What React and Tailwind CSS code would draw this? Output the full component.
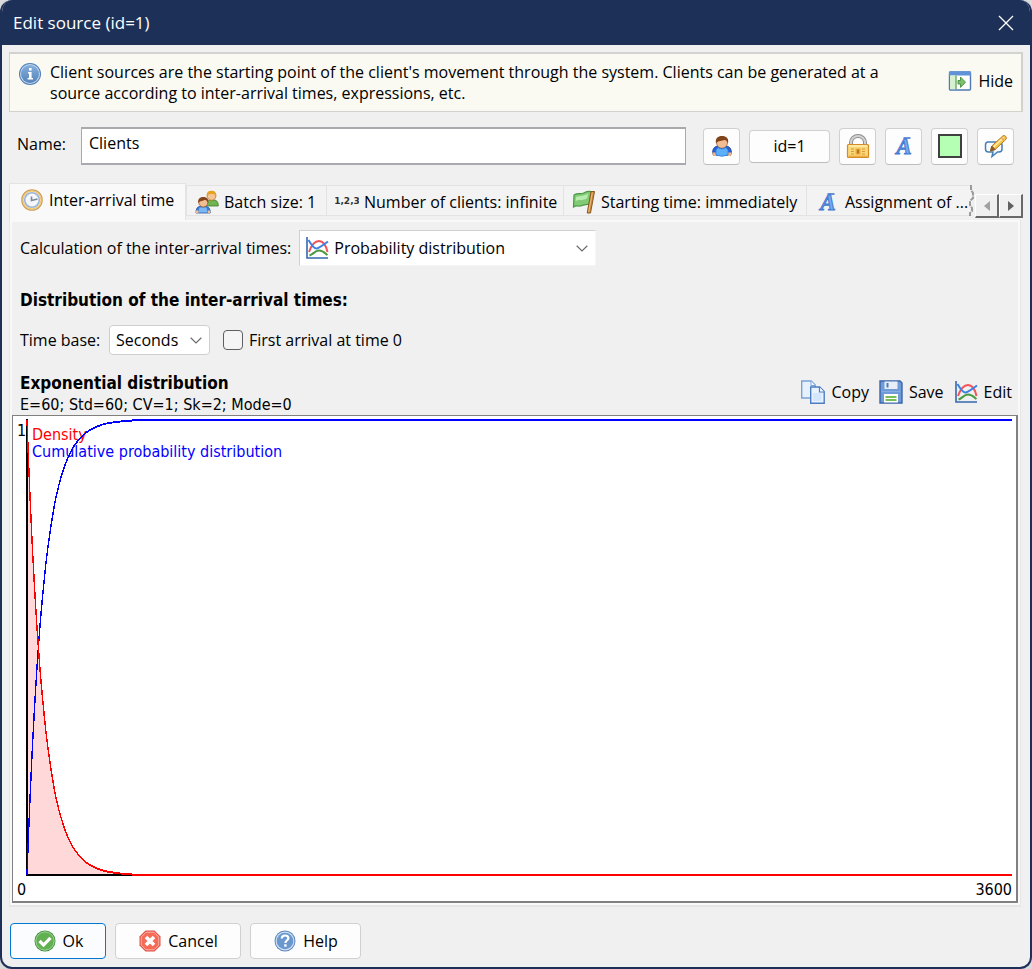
import React from 'react';

/* ---------- icons ---------- */

function InfoIcon() {
  return (
    <svg className="size-6 shrink-0" viewBox="0 0 24 24" aria-hidden="true">
      <defs>
        <linearGradient id="infoFill" x1="0" y1="0" x2="0" y2="1">
          <stop offset="0" stopColor="#86b0dc" />
          <stop offset="1" stopColor="#5583b8" />
        </linearGradient>
      </defs>
      <circle cx="12" cy="12" r="11" fill="#4f7fba" />
      <circle cx="12" cy="12" r="10" fill="#c3d8ef" />
      <circle cx="12" cy="12" r="9" fill="url(#infoFill)" />
      <rect x="11" y="6" width="2.6" height="2.6" fill="#fff" />
      <path d="M10 10h3.6v6H15v1.6H9.6V16H11v-4.400h-1z" fill="#fff" />
    </svg>
  );
}

function HideIcon() {
  return (
    <svg className="size-6" viewBox="0 0 24 24" aria-hidden="true">
      <rect x="1.5" y="3" width="21" height="18" rx="1" fill="#fff" stroke="#4f78b5" strokeWidth="1.4" />
      <rect x="1" y="2.5" width="22" height="4" fill="#5f92d6" />
      <rect x="2.2" y="6.5" width="5.3" height="13.7" fill="#d5f2cf" />
      <path d="M8 6.5v13.7" stroke="#6aa561" strokeWidth="1.4" />
      <path d="M10 11.5h2.500V8l5 5.200-5 5.200V15H10z" fill="#7fbf6e" stroke="#4b964b" strokeWidth="1" />
    </svg>
  );
}

function UserIcon() {
  return (
    <svg className="size-6" viewBox="0 0 24 24" aria-hidden="true">
      <path d="M2.500 19c0-4 1.500-6.500 5-7h9c3.500.5 5 3 5 7l-1 2.500h-17z" fill="#2a5fd0" stroke="#234c9c" strokeWidth=".8" />
      <path d="M2 18.500h4.500V22H3.500zM17.500 18.500H22L20.500 22h-3z" fill="#f3b583" />
      <ellipse cx="12" cy="8.500" rx="5.500" ry="5.800" fill="#f3bd93" stroke="#a7683d" strokeWidth=".8" />
      <path d="M6 9.500C5 4 8 2 12 2s7.200 2 6 7.500c-1-2.500-2-3.500-3.500-3.500-2 1.200-6.500.3-8.500 3.500z" fill="#81431a" />
      <path d="M6 16l2-2.500q4 3 8 0l2 2.500v5q-6 2.500-12 0z" fill="#5cb0fa" stroke="#2f7ede" strokeWidth=".8" />
    </svg>
  );
}

function LockIcon() {
  return (
    <svg className="size-6" viewBox="0 0 24 24" aria-hidden="true">
      <path d="M5 12V8.500a7 6.500 0 0 1 14 0V12" fill="none" stroke="#8d8d8d" strokeWidth="4" />
      <path d="M5 12V8.500a7 6.500 0 0 1 14 0V12" fill="none" stroke="#d2d2d2" strokeWidth="2" />
      <rect x="1.500" y="10.500" width="21" height="13" rx="1" fill="#fbd877" stroke="#d58c28" strokeWidth="1.200" />
      <path d="M3 12h18" stroke="#fff0b7" strokeWidth="1.400" />
      <path d="M5 15h3m-3 2.500h3M5 20h3m8-5h3m-3 2.500h3M16 20h3" stroke="#d79837" strokeWidth="1.200" />
      <path d="M9.500 14.500h5v6h-5z" fill="#eaa93c" />
      <path d="M12 15.500v4" stroke="#a86a1c" strokeWidth="1.600" />
      <path d="M2.500 22.300h19" stroke="#eba63d" strokeWidth="1.200" />
    </svg>
  );
}

function LetterIcon() {
  return (
    <svg className="size-6 shrink-0" viewBox="0 0 24 24" aria-hidden="true">
      <text x="12" y="20" textAnchor="middle" fontFamily="Liberation Serif, serif" fontSize="23" fontWeight="700" fontStyle="italic" fill="#76aaf0" stroke="#4377cf" strokeWidth="1">A</text>
      <path d="M11.500 4h7" stroke="#4377cf" strokeWidth="1.600" />
    </svg>
  );
}

function PencilIcon() {
  return (
    <svg className="size-6" viewBox="0 0 24 24" aria-hidden="true">
      <path d="M3 8h12q3 0 3 3v4q0 3-3 3h-1.500L8 22.500l1-4.500H4.500q-3 0-3-3v-4Q1.500 8 4 8z" fill="#f8fbff" stroke="#477fb8" strokeWidth="1.500" />
      <path d="M6.500 17l1.300-5L19 1.800q1.500-.8 2.700.6t.4 2.700L11.200 15.500z" fill="#f7c64c" stroke="#b87a1f" strokeWidth="1" />
      <path d="M9.500 13L19.500 3.500" stroke="#fff0a8" strokeWidth="1.400" />
      <path d="M6.500 17l1.300-5 3.400 3.500z" fill="#8d5a30" stroke="#83572e" strokeWidth=".8" />
      <path d="M17.300 3.500l3.400 3.400" stroke="#d9a870" strokeWidth="1.400" />
    </svg>
  );
}

function ClockIcon() {
  return (
    <svg className="size-6 shrink-0" viewBox="0 0 24 24" aria-hidden="true">
      <circle cx="12" cy="12" r="10" fill="#fff" stroke="#c9a05a" strokeWidth="1.600" />
      <circle cx="12" cy="12" r="9" fill="none" stroke="#f0cb7d" strokeWidth="1.500" />
      <circle cx="12" cy="12" r="7.300" fill="#f4f7fb" stroke="#9db3d8" strokeWidth="1.600" />
      <path d="M11.500 8.500v4l6-1.500" fill="none" stroke="#7d8895" strokeWidth="1.600" />
    </svg>
  );
}

function UsersIcon() {
  return (
    <svg className="size-6 shrink-0" viewBox="0 0 24 24" aria-hidden="true">
      <path d="M11 16c0-4 1.500-6 4-6h4c3 0 4.300 2.500 4.300 6z" fill="#6fb450" stroke="#3c7c2a" strokeWidth=".8" />
      <circle cx="16.500" cy="6" r="4.300" fill="#f5c495" stroke="#c0772c" strokeWidth=".8" />
      <path d="M11.800 6.500C11 2 14 .8 16.500.8S22 2 21.300 6.500C20 4 18 4 16.500 4s-3.200 0-4.700 2.500z" fill="#e5a124" />
      <path d="M1 23c0-4.500 1.500-6.500 4-6.500h6c2.500 0 4.300 2 4.300 6.500z" fill="#3d7ed5" stroke="#2450a0" strokeWidth=".8" />
      <path d="M4.500 17.500h7l1 5h-9z" fill="#79b8f5" />
      <path d="M1 20.500h2.500V23H1zM12.800 20.500h2.500V23h-2.500z" fill="#f3bd93" />
      <circle cx="8.300" cy="12.500" r="4.500" fill="#f3bd93" stroke="#9a5b31" strokeWidth=".8" />
      <path d="M3.300 13C2.500 8.500 5.500 7 8.300 7s5.700 1.500 5 6c-1.300-2.500-2.500-3-4-3-1.500 1.200-4.500.8-6 3z" fill="#87461b" />
    </svg>
  );
}

function NumbersIcon() {
  return (
    <svg className="size-6 shrink-0" viewBox="0 0 24 24" aria-hidden="true">
      <text x="12" y="14" textAnchor="middle" fontFamily="DejaVu Sans" fontSize="9" fontWeight="700" fill="#333">1,2,3</text>
    </svg>
  );
}

function FlagIcon() {
  return (
    <svg className="size-6 shrink-0" viewBox="0 0 24 24" aria-hidden="true">
      <path d="M2 5c3-2 5-1 8-1.500s4-3 9-2l-1.500 13c-4-1-6 1-9 1.500s-4.500-1-7 1z" fill="#82cb76" stroke="#4a9a45" strokeWidth="1.200" />
      <path d="M4 7c4-1.500 8-.5 12-3.500l-.7 4.500C11 11 8 9 3.500 11z" fill="#b8ecaf" />
      <path d="M19 1.500h3.500L18.500 23h-3.300z" fill="#c98a3b" stroke="#8a5a24" strokeWidth="1" />
      <path d="M20.300 2.500L16.700 22" stroke="#edc080" strokeWidth="1" />
    </svg>
  );
}

function CurvesIcon() {
  return (
    <svg className="size-6 shrink-0" viewBox="0 0 24 24" aria-hidden="true">
      <path d="M4.500 19.500C8 18.500 10 14.500 14 14.500s6 2.500 8.500 4.500" fill="none" stroke="#4a9a3f" strokeWidth="2" />
      <path d="M4 16Q8 5 14 5t8.500 11" fill="none" stroke="#f5525a" strokeWidth="2" />
      <path d="M3.500 4Q9 13.500 12 12.500T23 5.500" fill="none" stroke="#3c82e2" strokeWidth="2" />
      <path d="M2 1v21h21" fill="none" stroke="#3468ad" strokeWidth="1.600" />
    </svg>
  );
}

function CopyIcon() {
  return (
    <svg className="size-6" viewBox="0 0 24 24" aria-hidden="true">
      <path d="M.7 1h9.500l4 4v13H.7z" fill="#e7f1fd" stroke="#79a2d8" strokeWidth="1.400" />
      <path d="M10 1v4.500h4" fill="#fff" stroke="#79a2d8" />
      <path d="M9.700 7h9l4.500 4.500v11.700H9.700z" fill="#e9f3ff" stroke="#4c7dc1" strokeWidth="1.400" />
      <path d="M18.500 7v5h4.500" fill="#fff" stroke="#4c7dc1" strokeWidth="1.200" />
      <path d="M12 13h8.500v8H12z" fill="#d3e6fc" />
    </svg>
  );
}

function SaveIcon() {
  return (
    <svg className="size-6" viewBox="0 0 24 24" aria-hidden="true">
      <path d="M1 1h20L23 3v20H1z" fill="#6f9bd8" stroke="#3a64a8" strokeWidth="1.400" />
      <path d="M5.500 1.500h13V9h-13z" fill="#e9eff8" />
      <path d="M8.500 3v4.500" stroke="#4d78b9" strokeWidth="2" />
      <path d="M2.500 11.500h19" stroke="#86aee3" />
      <path d="M5 14h14v8.500H5z" fill="#fff" />
      <path d="M6.500 17h11M6.500 20h11" stroke="#79bd55" strokeWidth="1.800" />
    </svg>
  );
}

function OkIcon() {
  return (
    <svg className="size-6" viewBox="0 0 24 24" aria-hidden="true">
      <circle cx="12" cy="12" r="10.500" fill="#3f8a3a" />
      <circle cx="12" cy="12" r="9.200" fill="#62b052" stroke="#a6dc99" strokeWidth="1" />
      <path d="M6.500 12l4 4 7-7.200" fill="none" stroke="#fff" strokeWidth="3.200" />
    </svg>
  );
}

function CancelIcon() {
  return (
    <svg className="size-6" viewBox="0 0 24 24" aria-hidden="true">
      <path d="M7.500 1.500h9l6 6v9l-6 6h-9l-6-6v-9z" fill="#e15146" />
      <path d="M8 3.200h8L20.800 8v8L16 20.800H8L3.200 16V8z" fill="#f76a55" stroke="#fbb9af" strokeWidth="1" />
      <path d="M8 8l8 8m0-8l-8 8" stroke="#fff" strokeWidth="3.600" />
    </svg>
  );
}

function HelpIcon() {
  return (
    <svg className="size-6" viewBox="0 0 24 24" aria-hidden="true">
      <circle cx="12" cy="12" r="10.500" fill="#5c86bd" />
      <circle cx="12" cy="12" r="9.500" fill="#cfe0f3" />
      <circle cx="12" cy="12" r="8.300" fill="#6a97cd" />
      <path d="M8.800 9.500q0-3 3.300-3t3.300 2.700c0 2-3 2.200-3 4.800" fill="none" stroke="#fff" strokeWidth="2.200" />
      <rect x="11.200" y="15.300" width="2.400" height="2.400" fill="#fff" />
    </svg>
  );
}

function ChevronDown({ className }) {
  return (
    <svg className={className} viewBox="0 0 12 7" aria-hidden="true">
      <path d="M.7.8L6 6 11.300.8" fill="none" stroke="#6b6b6b" strokeWidth="1.200" />
    </svg>
  );
}

/* ---------- parts ---------- */

function ToolButton({ label, children }) {
  return (
    <button type="button" aria-label={label} className="flex size-[37px] shrink-0 items-center justify-center rounded border border-[#d0d0d0] border-b-[#bdbdbd] bg-[#fdfdfd]">
      {children}
    </button>
  );
}

function LinkButton({ icon, children }) {
  return (
    <button type="button" className="flex items-center gap-1.5">
      {icon}
      {children}
    </button>
  );
}

function Tab({ icon, children, className = '' }) {
  return (
    <button type="button" role="tab" aria-selected="false" className={`flex h-[31px] shrink-0 items-center gap-[5px] overflow-hidden whitespace-nowrap border-y border-l border-[#e3e3e3] bg-[#f3f3f3] pl-2 pt-[3px] ${className}`}>
      {icon}
      {children}
    </button>
  );
}

function ScrollButton({ label, points, color }) {
  return (
    <button type="button" aria-label={label} className="flex size-6 items-center justify-center border-b-2 border-r-2 border-l border-t border-b-[#696969] border-r-[#696969] border-l-white border-t-white bg-[#f0f0f0]">
      <svg className="h-3 w-2" viewBox="0 0 8 12" aria-hidden="true">
        <polygon points={points} fill={color} />
      </svg>
    </button>
  );
}

/* ---------- chart ---------- */

const MEAN = 60;
const RANGE = 3600;
const PLOT_W = 985;
const PLOT_H = 453;
const TAIL = 105;

function curve(fn) {
  const points = [];
  for (let x = 0; x <= TAIL; x += 1) {
    const t = (x / PLOT_W) * RANGE;
    points.push(`${x},${Math.round(PLOT_H * (1 - fn(t)))}`);
  }
  return points.join(' ');
}

const DENSITY = curve((t) => Math.exp(-t / MEAN));
const CUMULATIVE = curve((t) => 1 - Math.exp(-t / MEAN));

function Chart() {
  return (
    <div className="flex min-h-64 flex-1 flex-col border-b-2 border-l border-r-2 border-t border-[#808080] bg-white pl-1 pr-1 pt-1 font-['DejaVu_Sans_Condensed',sans-serif]">
      <div className="flex flex-1">
        <div className="w-[10px] leading-[22px]">1</div>
        <div className="relative flex-1">
          <div className="absolute left-[5px] top-[6px] leading-[17px]">
            <div className="text-[#ff0000]">Density</div>
            <div className="text-[#0000ff]">Cumulative probability distribution</div>
          </div>
          <svg className="absolute inset-0 size-full overflow-visible" viewBox={`0 0 ${PLOT_W} ${PLOT_H}`} preserveAspectRatio="none" role="img" aria-label="Density and cumulative probability">
            <g fill="none" shapeRendering="crispEdges">
              <polygon points={`0,${PLOT_H} ${DENSITY} ${TAIL},${PLOT_H}`} fill="#ffd9d9" />
              <path d={`M0 -1V${PLOT_H}H${PLOT_W}`} stroke="#000" strokeWidth="2" vectorEffect="non-scaling-stroke" />
              <polyline points={CUMULATIVE} stroke="#0000ff" strokeWidth="1.400" vectorEffect="non-scaling-stroke" />
              <polyline points={DENSITY} stroke="#ff0000" strokeWidth="1.400" vectorEffect="non-scaling-stroke" />
              <path d={`M${TAIL} 0H${PLOT_W}`} stroke="#0000ff" strokeWidth="2" vectorEffect="non-scaling-stroke" />
              <path d={`M${TAIL} ${PLOT_H}H${PLOT_W}`} stroke="#ff0000" strokeWidth="2" vectorEffect="non-scaling-stroke" />
            </g>
          </svg>
        </div>
      </div>
      <div className="flex h-[26px] items-end justify-between leading-[22px]">
        <span>0</span>
        <span>3600</span>
      </div>
    </div>
  );
}

/* ---------- page ---------- */

export default function App() {
  return (
    <div className="min-h-screen bg-[#d9dadc] font-['Open_Sans',sans-serif] text-base text-black">
      <div className="flex min-h-screen flex-col overflow-hidden rounded-xl border-x-2 border-b-2 border-[#1d3158] bg-[#f0f0f0]">
        <header className="flex h-[45px] shrink-0 items-center justify-between bg-[#1d3158] pl-[11px] pr-4 text-[17px] text-white">
          <h1>Edit source (id=1)</h1>
          <button type="button" aria-label="Close">
            <svg className="size-4" viewBox="0 0 16 16" aria-hidden="true">
              <path d="M1 1l14 14M15 1L1 15" stroke="#fff" strokeWidth="1.300" />
            </svg>
          </button>
        </header>

        <main className="flex flex-1 flex-col px-[7px] pb-2 pt-[7px]">
          <section className="flex h-[60px] justify-between border border-r-2 border-t-2 border-[#d2d2cf] bg-[#fafaf3] pl-2 pr-2 pt-2">
            <div className="flex gap-2">
              <InfoIcon />
              <p className="max-w-[850px] leading-[21px]">
                Client sources are the starting point of the client's movement through the system. Clients can be generated at a source according to inter-arrival times, expressions, etc.
              </p>
            </div>
            <div className="flex pb-3">
              <LinkButton icon={<HideIcon />}>Hide</LinkButton>
            </div>
          </section>

          <div className="mt-[15px] flex items-center pl-2 pr-[9px]">
            <label htmlFor="name" className="w-16 shrink-0 pb-1">Name:</label>
            <input id="name" type="text" defaultValue="Clients" className="h-[38px] min-w-0 flex-1 border border-y-2 border-[#a9a9ad] bg-white pb-1.5 pl-[7px] outline-none" />
            <div className="ml-[17px] flex items-center gap-[9px]">
              <ToolButton label="Client icon"><UserIcon /></ToolButton>
              <button type="button" className="h-[33px] w-[81px] rounded border border-[#d0d0d0] border-b-[#bdbdbd] bg-[#fdfdfd]">id=1</button>
              <ToolButton label="Lock"><LockIcon /></ToolButton>
              <ToolButton label="Font"><LetterIcon /></ToolButton>
              <ToolButton label="Colour"><span className="size-6 border-2 border-[#404040] bg-[#b4ffb4]" /></ToolButton>
              <ToolButton label="Edit description"><PencilIcon /></ToolButton>
            </div>
          </div>

          <div role="tablist" className="mt-[18px] flex items-end">
            <button type="button" role="tab" aria-selected="true" className="flex h-[37px] w-[177px] shrink-0 items-center gap-[5px] whitespace-nowrap border-l border-r border-t border-[#e3e3e3] bg-[#f9f9f9] pb-1 pl-[10px]">
              <ClockIcon />
              Inter-arrival time
            </button>
            <div className="flex min-w-0 flex-1 pb-[4px]">
              <Tab icon={<UsersIcon />} className="w-[140px]">Batch size: 1</Tab>
              <Tab icon={<NumbersIcon />} className="w-[237px]">Number of clients: infinite</Tab>
              <Tab icon={<FlagIcon />} className="w-[243px]">Starting time: immediately</Tab>
              <Tab icon={<LetterIcon />} className="w-[166px] gap-[5px] pl-[9px]">Assignment of ...</Tab>
              <svg className="-ml-1 h-[31px] w-1.5 shrink-0" viewBox="0 0 6 31" aria-hidden="true">
                <path d="M3 0v5l2 3v5l-3 3v4l2 3v3l-2 2v3" fill="none" stroke="#9a9a9a" strokeWidth="2" strokeDasharray="5 1" />
              </svg>
            </div>
            <div className="flex pb-0.5">
              <ScrollButton label="Previous tabs" points="7,1 7,11 1,6" color="#a0a0a0" />
              <ScrollButton label="Next tabs" points="1,1 1,11 7,6" color="#606060" />
            </div>
          </div>

          <section role="tabpanel" className="mr-0.5 flex flex-1 flex-col border-b-2 border-l border-r border-[#e6e6e6]">
            <div className="h-0.5 bg-[#f9f9f9]" />
            <div className="flex flex-1 flex-col border-x-2 border-b-2 border-[#f9f9f9] pt-2">
              <div className="flex items-center gap-2 pl-2">
                <label htmlFor="calculation">Calculation of the inter-arrival times:</label>
                <div className="relative flex h-9 w-[297px] items-center border border-[#f5f5f5] border-l-[#d0d0d0] border-t-[#d0d0d0] bg-white">
                  <span className="pointer-events-none absolute left-[5px]"><CurvesIcon /></span>
                  <select id="calculation" className="h-full w-full appearance-none bg-transparent pl-[34px] outline-none">
                    <option>Probability distribution</option>
                  </select>
                  <ChevronDown className="pointer-events-none absolute right-[7px] h-[7px] w-3" />
                </div>
              </div>

              <h2 className="mt-[22px] pl-2 font-['DejaVu_Sans_Condensed',sans-serif] text-[17px] font-bold leading-6">Distribution of the inter-arrival times:</h2>

              <div className="mt-[13px] flex items-center pl-2">
                <label htmlFor="timebase" className="w-[89px]">Time base:</label>
                <div className="relative flex h-[30px] w-[101px] items-center rounded-sm border border-[#cfcfcf] bg-white">
                  <select id="timebase" className="h-full w-full appearance-none bg-transparent pl-1.5 outline-none">
                    <option>Seconds</option>
                  </select>
                  <ChevronDown className="pointer-events-none absolute right-[7px] h-[7px] w-3" />
                </div>
                <label className="ml-[13px] flex items-center gap-1.5">
                  <input type="checkbox" className="size-5 appearance-none rounded border border-[#5f5f5f] bg-[#f5f5f5]" />
                  First arrival at time 0
                </label>
              </div>

              <div className="mt-[18px] flex items-center justify-between pl-2 pr-1.5 leading-[21px]">
                <div className="font-['DejaVu_Sans_Condensed',sans-serif]">
                  <h3 className="text-[17px] font-bold">Exponential distribution</h3>
                  <p>E=60; Std=60; CV=1; Sk=2; Mode=0</p>
                </div>
                <div className="flex gap-[10px] pb-1">
                  <LinkButton icon={<CopyIcon />}>Copy</LinkButton>
                  <LinkButton icon={<SaveIcon />}>Save</LinkButton>
                  <LinkButton icon={<CurvesIcon />}>Edit</LinkButton>
                </div>
              </div>

              <Chart />
            </div>
          </section>

          <footer className="ml-px mt-4 flex gap-[9px]">
            <button type="button" className="flex h-9 w-24 items-center justify-center gap-1.5 rounded border border-[#0078d4] bg-[#fafcff]"><OkIcon />Ok</button>
            <button type="button" className="flex h-9 w-[126px] items-center justify-center gap-1.5 rounded border border-[#d0d0d0] bg-[#fdfdfd]"><CancelIcon />Cancel</button>
            <button type="button" className="flex h-9 w-[111px] items-center justify-center gap-1.5 rounded border border-[#d0d0d0] bg-[#fdfdfd]"><HelpIcon />Help</button>
          </footer>
        </main>
      </div>
    </div>
  );
}
